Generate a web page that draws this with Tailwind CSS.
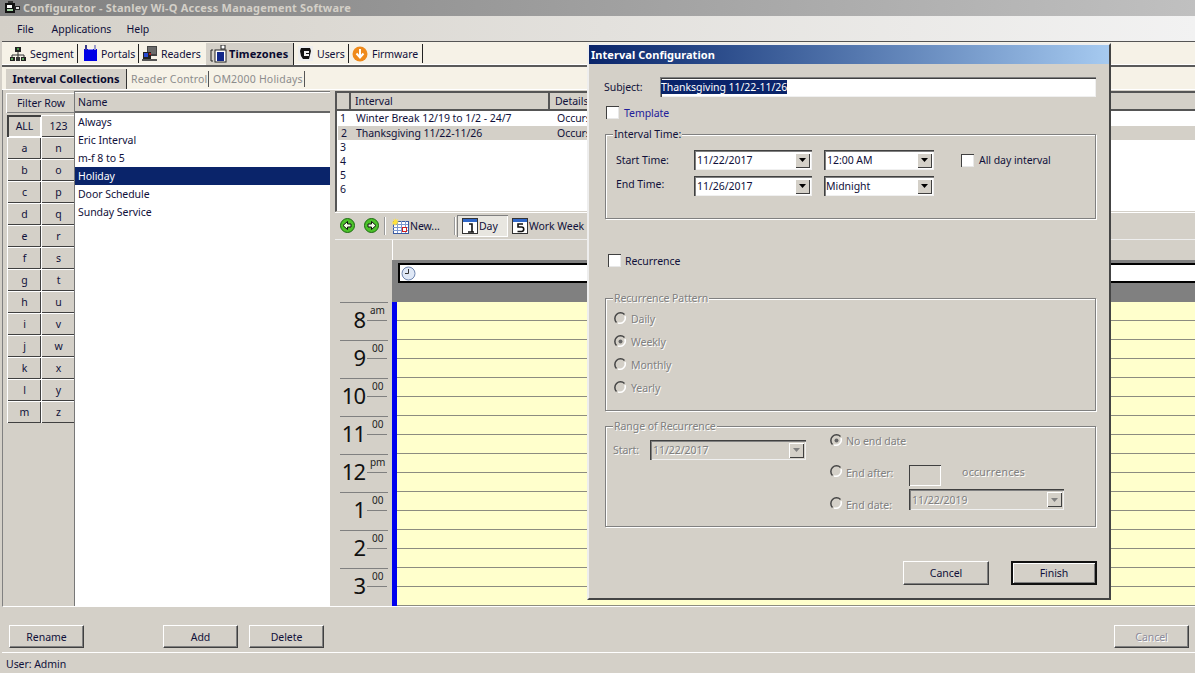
<!DOCTYPE html>
<html><head><meta charset="utf-8">
<script src="https://cdn.jsdelivr.net/npm/@tailwindcss/browser@4"></script>
</head>
<body class="m-0">
<div class="relative w-[1195px] h-[673px] overflow-hidden flex flex-col bg-[#d4d0c8] text-[10.5px] tracking-[-0.05px] leading-[14px] text-[#10103a] font-['Noto_Sans',sans-serif] antialiased">

  <!-- title bar -->
  <div class="h-[16px] shrink-0 flex items-center bg-gradient-to-r from-[#808080] to-[#c0c0c0] pl-[4px]">
    <svg width="17" height="14" viewBox="0 0 17 14"><rect x="1" y="2" width="10" height="10" fill="#111"/><rect x="3" y="4" width="5" height="3" fill="#fff"/><rect x="3" y="8" width="6" height="2" fill="#9fd0a0"/><rect x="10" y="5" width="6" height="4" fill="#222"/><rect x="12" y="6" width="3" height="2" fill="#ddd"/><rect x="4" y="0" width="5" height="2" fill="#333"/></svg>
    <span class="ml-[2px] font-bold text-[11px] text-[#d4d0c8] tracking-[0.2px]">Configurator - Stanley Wi-Q Access Management Software</span>
  </div>

  <!-- menu bar -->
  <div class="h-[26px] shrink-0 flex items-center ml-[2px] pl-[15px] gap-[18px] bg-gradient-to-r from-[#d4d0c8] to-[#f2f2f2] border-b border-[#555]">
    <span>File</span><span class="w-[57px] whitespace-nowrap">Applications</span><span>Help</span>
  </div>

  <!-- main toolbar -->
  <div class="h-[25px] shrink-0 flex items-center ml-[2px] bg-[#f6f2e7] border-b-2 border-[#5a5a5a] shadow-[inset_0_-1px_0_#fff]">
    <div class="flex items-center h-[19px] pl-[8px] border-r border-[#222] w-[76px]">
      <svg class="shrink-0" width="16" height="16" viewBox="0 0 16 16"><rect x="5" y="1" width="6" height="5" fill="#222"/><rect x="7" y="2" width="2" height="2" fill="#4a9a4a"/><path d="M8 6v3M2 9h12M2 9v2M8 9v2M14 9v2" stroke="#333" fill="none"/><rect x="0" y="11" width="5" height="4" fill="#222"/><rect x="6" y="11" width="4" height="4" fill="#333"/><rect x="11" y="11" width="5" height="4" fill="#222"/><rect x="1" y="12" width="2" height="2" fill="#5aa55a"/><rect x="12" y="12" width="2" height="2" fill="#5aa55a"/></svg>
      <span class="ml-[4px]">Segment</span>
    </div>
    <div class="flex items-center h-[19px] pl-[5px] border-r border-[#222] w-[61px]">
      <svg class="shrink-0" width="15" height="17" viewBox="0 0 15 17"><rect x="1" y="4" width="13" height="12" fill="#0000e6"/><rect x="2" y="0" width="2" height="5" fill="#3a3a88"/><rect x="11" y="0" width="2" height="5" fill="#9a9ac8"/><path d="M5 4h5" stroke="#fff"/></svg>
      <span class="ml-[3px]">Portals</span>
    </div>
    <div class="flex items-center h-[19px] pl-[3px] w-[67px]">
      <svg class="shrink-0" width="16" height="16" viewBox="0 0 16 16"><rect x="5" y="0" width="10" height="10" fill="#444"/><rect x="6" y="1" width="8" height="7" fill="#6a6a6a"/><rect x="1" y="6" width="8" height="7" fill="#222"/><rect x="2" y="7" width="4" height="4" fill="#2a4ad0"/><rect x="7" y="7" width="2" height="2" fill="#b02020"/><rect x="0" y="13" width="15" height="2" fill="#555"/></svg>
      <span class="ml-[3px]">Readers</span>
    </div>
    <div class="flex items-center h-[22px] pl-[4px] bg-[#d4d0c8] border-r border-[#222] w-[88px]">
      <svg class="shrink-0" width="17" height="18" viewBox="0 0 17 18"><path d="M1 5v11M3 5H1M3 16H1" stroke="#222" fill="none"/><rect x="5" y="5" width="11" height="12" fill="#fff" stroke="#222"/><rect x="7" y="7" width="7" height="9" fill="#12288a"/><rect x="11" y="0" width="4" height="4" fill="#fff" stroke="#222"/></svg>
      <span class="ml-[2px] font-bold text-[11px] text-[#0a0a30] tracking-[0.1px]">Timezones</span>
    </div>
    <div class="flex items-center h-[19px] pl-[4px] border-r border-[#222] w-[55px]">
      <svg class="shrink-0" width="15" height="15" viewBox="0 0 15 15"><rect width="15" height="15" fill="#eee"/><path d="M3 2h9l1 3-1 4-1 4H5L3 10 2 5z" fill="#111"/><path d="M6 5h5v2H8v1h3v2H6z" fill="#eee"/></svg>
      <span class="ml-[4px]">Users</span>
    </div>
    <div class="flex items-center h-[19px] pl-[3px] border-r border-[#222] w-[74px]">
      <svg class="shrink-0" width="16" height="16" viewBox="0 0 16 16"><circle cx="8" cy="8" r="7.5" fill="#ef8a1a"/><path d="M8 3v7M4.500 7.500 8 11.500l3.500-4" stroke="#fff" stroke-width="2" fill="none"/></svg>
      <span class="ml-[4px]">Firmware</span>
    </div>
  </div>

  <!-- tabs -->
  <div class="h-[23px] shrink-0 flex items-end ml-[2px] pl-[4px] bg-[#f6f2e7] border-b border-white">
    <div class="h-[20px] w-[121px] flex items-center justify-center bg-[#d4d0c8] border-r border-[#333] font-bold text-[11px] tracking-normal text-[#0a0a30]">Interval Collections</div>
    <div class="h-[16px] mb-[2px] flex items-center pl-[4px] w-[82px] border-r border-[#555] text-[#8c8c8c] tracking-[0.15px] whitespace-nowrap">Reader Control</div>
    <div class="h-[16px] mb-[2px] flex items-center pl-[4px] w-[96px] border-r border-[#555] text-[#8c8c8c] tracking-[0.2px] whitespace-nowrap">OM2000 Holidays</div>
  </div>

  <!-- main -->
  <div class="h-[517px] shrink-0 flex ml-[2px] border-l border-[#808080] border-b border-b-white">
    <!-- filter column -->
    <div class="w-[68px] ml-[3px] pt-[3px] shrink-0">
      <div class="h-[20px] w-[69px] pl-[1px] flex items-center justify-center shadow-[inset_1px_1px_0_#fff,inset_-1px_-1px_0_#808080]">Filter Row</div>
      <div class="grid grid-cols-2 w-[68px] ml-[1px] auto-rows-[22px] mt-[2px] text-center [&>div]:flex [&>div]:items-center [&>div]:justify-center [&>div]:pl-[1px] [&>div]:shadow-[inset_1px_1px_0_#fff,inset_-1px_-1px_0_#404040]">
        <div class="!shadow-[inset_2px_2px_0_#404040,inset_-1px_-1px_0_#fff]">ALL</div><div>123</div>
        <div>a</div><div>n</div><div>b</div><div>o</div><div>c</div><div>p</div><div>d</div><div>q</div><div>e</div><div>r</div><div>f</div><div>s</div><div>g</div><div>t</div><div>h</div><div>u</div><div>i</div><div>v</div><div>j</div><div>w</div><div>k</div><div>x</div><div>l</div><div>y</div><div>m</div><div>z</div>
      </div>
    </div>
    <!-- name list -->
    <div class="w-[256px] shrink-0 mt-[1px] flex flex-col bg-white border-l border-[#777]">
      <div class="h-[22px] shrink-0 flex items-center pl-[3px] bg-[#d4d0c8] border-t border-[#777] border-b-2 border-b-[#666] shadow-[inset_0_1px_0_#fff]">Name</div>
      <div class="h-[18px] flex items-center pl-[3px]">Always</div>
      <div class="h-[18px] flex items-center pl-[3px]">Eric Interval</div>
      <div class="h-[18px] flex items-center pl-[3px]">m-f 8 to 5</div>
      <div class="h-[18px] flex items-center pl-[3px] bg-[#0a246a] text-white">Holiday</div>
      <div class="h-[18px] flex items-center pl-[3px]">Door Schedule</div>
      <div class="h-[18px] flex items-center pl-[3px]">Sunday Service</div>
    </div>
    <!-- right side -->
    <div class="flex-1 min-w-0 ml-[5px] flex flex-col">
      <!-- interval grid -->
      <div class="h-[121px] shrink-0 mt-[1px] bg-white border-t-2 border-l-2 border-[#555] border-b border-b-[#d4d0c8] shadow-[0_1px_0_#fff]">
        <div class="h-[16px] flex bg-[#d4d0c8] border-b-2 border-[#555] box-content">
          <div class="w-[14px] border-r-2 border-[#555]"></div>
          <div class="w-[199px] pl-[4px] flex items-center border-r-2 border-[#555]">Interval</div>
          <div class="flex-1 pl-[5px] flex items-center">Details</div>
        </div>
        <div>
          <div class="h-[14px] flex items-center pl-[3px]"><span class="w-[16px]">1</span><span class="w-[201px]">Winter Break 12/19 to 1/2 - 24/7</span><span>Occurs</span></div>
          <div class="h-[14px] flex items-center pl-[3px] ml-[1px] mt-[1px] bg-[#d4d0c8]"><span class="w-[15px]">2</span><span class="w-[201px]">Thanksgiving 11/22-11/26</span><span>Occurs</span></div>
          <div class="h-[14px] flex items-center pl-[3px]">3</div>
          <div class="h-[14px] flex items-center pl-[3px]">4</div>
          <div class="h-[14px] flex items-center pl-[3px]">5</div>
          <div class="h-[14px] flex items-center pl-[3px]">6</div>
        </div>
      </div>
      <!-- calendar toolbar -->
      <div class="h-[27px] shrink-0 flex items-center pl-[5px] text-[#10103a]">
        <svg width="15" height="15" viewBox="0 0 15 15"><circle cx="7.500" cy="7.500" r="7" fill="#4cc22a" stroke="#1c6a10"/><path d="M11 6H7.500V3.500L3 7.500l4.500 4V9H11z" fill="#f4ffe8" stroke="#111"/></svg>
        <svg class="ml-[9px]" width="15" height="15" viewBox="0 0 15 15"><circle cx="7.500" cy="7.500" r="7" fill="#4cc22a" stroke="#1c6a10"/><path d="M4 6h3.500V3.500l4.500 4-4.500 4V9H4z" fill="#f4ffe8" stroke="#111"/></svg>
        <div class="w-px h-[18px] bg-[#999] ml-[5px] shadow-[1px_0_0_#fff]"></div>
        <svg class="ml-[7px]" width="17" height="16" viewBox="0 0 17 16"><rect x="1.500" y="3.500" width="15" height="12" fill="#fff" stroke="#3a5aa0"/><path d="M1 6.500h15M1 9.500h15M1 12.500h15M5.500 3v12M9.500 3v12M13.500 3v12" stroke="#7d99d0"/><rect x="10.500" y="9.500" width="4" height="4" fill="#fff" stroke="#d02020"/><path d="M3 0l1 2 2-1-1 2 2 1-2 1 1 2-2-1-1 2-1-2-2 1 1-2-1-1 2-1-1-2 2 1z" fill="#ffe23c"/></svg>
        <span class="ml-[1px] w-[44px]">New...</span>
        <div class="w-px h-[18px] bg-[#999] shadow-[1px_0_0_#fff]"></div>
        <div class="ml-[2px] h-[22px] w-[51px] flex items-center pl-[5px] bg-[#e8e6e0] shadow-[inset_1px_1px_0_#808080,inset_-1px_-1px_0_#fff]">
          <svg width="16" height="16" viewBox="0 0 16 16"><rect x=".5" y=".5" width="15" height="15" fill="#fff" stroke="#333"/><rect x="1" y="1" width="14" height="3" fill="#2f67c8"/><path d="M7 6h3v8M6 14h6" stroke="#111" stroke-width="1.600" fill="none"/></svg>
          <span class="ml-[1px]">Day</span>
        </div>
        <div class="ml-[4px] flex items-center">
          <svg width="16" height="16" viewBox="0 0 16 16"><rect x=".5" y=".5" width="15" height="15" fill="#fff" stroke="#333"/><rect x="1" y="1" width="14" height="3" fill="#2f67c8"/><path d="M11 6H6v3h3.500a2 2 0 0 1 0 4.500H5.500" stroke="#111" stroke-width="1.600" fill="none"/></svg>
          <span class="ml-[1px]">Work Week</span>
        </div>
      </div>
      <!-- calendar -->
      <div class="flex-1 min-h-0 flex border-t border-[#eee] overflow-hidden">
        <div class="w-[58px] shrink-0 -ml-px border-l border-[#808080] flex flex-col">
          <div class="h-[62px] shrink-0"></div>
          <div class="relative h-[38px] shrink-0 ml-[5px] mr-[4px] border-t border-[#808080] flex"><span class="w-[25px] text-right text-[22px] leading-[32px] text-[#111] -tracking-[1px]">8</span><span class="ml-[5px] text-[10px] leading-[14px] text-[#222]">am</span><span class="absolute left-[27px] right-[1px] top-[17px] border-t border-[#808080]"></span></div>
          <div class="relative h-[38px] shrink-0 ml-[5px] mr-[4px] border-t border-[#808080] flex"><span class="w-[25px] text-right text-[22px] leading-[32px] text-[#111] -tracking-[1px]">9</span><span class="ml-[7px] text-[10px] leading-[14px] text-[#222]">00</span><span class="absolute left-[27px] right-[1px] top-[17px] border-t border-[#808080]"></span></div>
          <div class="relative h-[38px] shrink-0 ml-[5px] mr-[4px] border-t border-[#808080] flex"><span class="w-[25px] text-right text-[22px] leading-[32px] text-[#111] -tracking-[1px]">10</span><span class="ml-[7px] text-[10px] leading-[14px] text-[#222]">00</span><span class="absolute left-[27px] right-[1px] top-[17px] border-t border-[#808080]"></span></div>
          <div class="relative h-[38px] shrink-0 ml-[5px] mr-[4px] border-t border-[#808080] flex"><span class="w-[25px] text-right text-[22px] leading-[32px] text-[#111] -tracking-[1px]">11</span><span class="ml-[7px] text-[10px] leading-[14px] text-[#222]">00</span><span class="absolute left-[27px] right-[1px] top-[17px] border-t border-[#808080]"></span></div>
          <div class="relative h-[38px] shrink-0 ml-[5px] mr-[4px] border-t border-[#808080] flex"><span class="w-[25px] text-right text-[22px] leading-[32px] text-[#111] -tracking-[1px]">12</span><span class="ml-[5px] text-[10px] leading-[14px] text-[#222]">pm</span><span class="absolute left-[27px] right-[1px] top-[17px] border-t border-[#808080]"></span></div>
          <div class="relative h-[38px] shrink-0 ml-[5px] mr-[4px] border-t border-[#808080] flex"><span class="w-[25px] text-right text-[22px] leading-[32px] text-[#111] -tracking-[1px]">1</span><span class="ml-[7px] text-[10px] leading-[14px] text-[#222]">00</span><span class="absolute left-[27px] right-[1px] top-[17px] border-t border-[#808080]"></span></div>
          <div class="relative h-[38px] shrink-0 ml-[5px] mr-[4px] border-t border-[#808080] flex"><span class="w-[25px] text-right text-[22px] leading-[32px] text-[#111] -tracking-[1px]">2</span><span class="ml-[7px] text-[10px] leading-[14px] text-[#222]">00</span><span class="absolute left-[27px] right-[1px] top-[17px] border-t border-[#808080]"></span></div>
          <div class="relative h-[38px] shrink-0 ml-[5px] mr-[4px] border-t border-[#808080] flex"><span class="w-[25px] text-right text-[22px] leading-[32px] text-[#111] -tracking-[1px]">3</span><span class="ml-[7px] text-[10px] leading-[14px] text-[#222]">00</span><span class="absolute left-[27px] right-[1px] top-[17px] border-t border-[#808080]"></span></div>
        </div>
        <div class="flex-1 min-w-0 flex flex-col">
          <div class="h-[20px] shrink-0 border-l border-white"></div>
          <div class="h-[42px] shrink-0 bg-[#808080] pt-[3px] pl-[6px]">
            <div class="h-[20px] bg-white border-2 border-black border-r-0 flex items-center pl-[1px]">
              <svg width="15" height="15" viewBox="0 0 15 15"><circle cx="7.500" cy="7.500" r="6.500" fill="#dfe8f6" stroke="#6f86b0"/><path d="M7.500 3v4.500H4" stroke="#333" fill="none"/></svg>
            </div>
          </div>
          <div class="flex-1 flex min-h-0">
            <div class="w-[5px] bg-[#0000ee] shrink-0"></div>
            <div class="flex-1 bg-[repeating-linear-gradient(to_bottom,#ffffcc_0,#ffffcc_18px,#8c8c80_18px,#8c8c80_19px)]"></div>
          </div>
        </div>
      </div>
    </div>
  </div>

  <!-- bottom buttons -->
  <div class="h-[46px] shrink-0 flex items-start pt-[18px] ml-[2px] pl-[7px] pr-[6px] border-b border-white">
    <div class="h-[23px] w-[75px] flex items-center justify-center border border-t-white border-l-white border-r-[#404040] border-b-[#404040] shadow-[inset_-1px_-1px_0_#808080]">Rename</div>
    <div class="ml-[79px] h-[23px] w-[75px] flex items-center justify-center border border-t-white border-l-white border-r-[#404040] border-b-[#404040] shadow-[inset_-1px_-1px_0_#808080]">Add</div>
    <div class="ml-[11px] h-[23px] w-[75px] flex items-center justify-center border border-t-white border-l-white border-r-[#404040] border-b-[#404040] shadow-[inset_-1px_-1px_0_#808080]">Delete</div>
    <div class="ml-auto h-[23px] w-[75px] flex items-center justify-center border border-t-white border-l-white border-r-[#404040] border-b-[#404040] shadow-[inset_-1px_-1px_0_#808080] text-[#8c8c9c] [text-shadow:1px_1px_0_#fff]">Cancel</div>
  </div>

  <!-- status -->
  <div class="flex-1 flex items-center pl-[6px] pt-[2px]">User: Admin</div>

  <!-- dialog -->
  <div class="absolute left-[587px] top-[43px] w-[524px] h-[557px] bg-[#d4d0c8] border-t-2 border-l-2 border-t-[#eee] border-l-[#eee] border-r-2 border-r-[#444] border-b-2 border-b-[#444] flex flex-col">
    <div class="h-[19px] shrink-0 flex items-center pl-[2px] bg-gradient-to-r from-[#0a246a] to-[#a6caf0] text-white text-[11px] tracking-[0.05px] font-bold">Interval Configuration</div>
    <div class="pl-[16px] pr-[13px] flex flex-col flex-1">
      <!-- subject -->
      <div class="mt-[13px] h-[20px] flex items-center">
        <span class="w-[54px] -ml-px mr-[2px]">Subject:</span>
        <div class="flex-1 h-[20px] bg-white flex items-center pl-[1px] shadow-[inset_1px_1px_0_#808080,inset_2px_2px_0_#404040,inset_-1px_-1px_0_#f0f0f0]">
          <span class="bg-[#0a246a] text-white">Thanksgiving 11/22-11/26</span>
        </div>
      </div>
      <!-- template -->
      <div class="mt-[9px] h-[13px] flex items-center pl-[1px]">
        <span class="w-[13px] h-[13px] bg-white shadow-[inset_1px_1px_0_#404040,inset_-1px_-1px_0_#e8e8e8]"></span>
        <span class="ml-[5px] text-[#22209a]">Template</span>
      </div>
      <!-- interval time -->
      <div class="relative mt-[15px] h-[85px] border border-[#808080] shadow-[inset_1px_1px_0_#fff,1px_1px_0_#fff] pt-[15px] pl-[10px]">
        <span class="absolute -top-[8px] left-[7px] px-[1px] bg-[#d4d0c8]">Interval Time:</span>
        <div class="flex items-center h-[20px]">
          <span class="w-[78px]">Start Time:</span>
          <div class="w-[118px] h-[20px] flex items-center justify-between bg-white pl-[3px] pr-[2px] shadow-[inset_1px_1px_0_#404040,inset_2px_2px_0_#808080,inset_-1px_-1px_0_#f0f0f0]"><span>11/22/2017</span><span class="w-[15px] h-[15px] flex items-center justify-center bg-[#d4d0c8] shadow-[inset_1px_1px_0_#fff,inset_-1px_-1px_0_#404040]"><svg width="7" height="4" viewBox="0 0 7 4"><path d="M0 0h7L3.500 4z" fill="#000"/></svg></span></div>
          <div class="ml-[12px] w-[110px] h-[20px] flex items-center justify-between bg-white pl-[3px] pr-[2px] shadow-[inset_1px_1px_0_#404040,inset_2px_2px_0_#808080,inset_-1px_-1px_0_#f0f0f0]"><span>12:00 AM</span><span class="w-[15px] h-[15px] flex items-center justify-center bg-[#d4d0c8] shadow-[inset_1px_1px_0_#fff,inset_-1px_-1px_0_#404040]"><svg width="7" height="4" viewBox="0 0 7 4"><path d="M0 0h7L3.500 4z" fill="#000"/></svg></span></div>
          <span class="ml-[27px] w-[13px] h-[13px] bg-white shadow-[inset_1px_1px_0_#404040,inset_-1px_-1px_0_#e8e8e8]"></span>
          <span class="ml-[5px]">All day interval</span>
        </div>
        <div class="flex items-center h-[20px] mt-[6px]">
          <span class="w-[78px] -mt-[5px]">End Time:</span>
          <div class="w-[118px] h-[20px] flex items-center justify-between bg-white pl-[3px] pr-[2px] shadow-[inset_1px_1px_0_#404040,inset_2px_2px_0_#808080,inset_-1px_-1px_0_#f0f0f0]"><span>11/26/2017</span><span class="w-[15px] h-[15px] flex items-center justify-center bg-[#d4d0c8] shadow-[inset_1px_1px_0_#fff,inset_-1px_-1px_0_#404040]"><svg width="7" height="4" viewBox="0 0 7 4"><path d="M0 0h7L3.500 4z" fill="#000"/></svg></span></div>
          <div class="ml-[12px] w-[110px] h-[20px] flex items-center justify-between bg-white pl-[2px] pr-[2px] shadow-[inset_1px_1px_0_#404040,inset_2px_2px_0_#808080,inset_-1px_-1px_0_#f0f0f0]"><span>Midnight</span><span class="w-[15px] h-[15px] flex items-center justify-center bg-[#d4d0c8] shadow-[inset_1px_1px_0_#fff,inset_-1px_-1px_0_#404040]"><svg width="7" height="4" viewBox="0 0 7 4"><path d="M0 0h7L3.500 4z" fill="#000"/></svg></span></div>
        </div>
      </div>
      <!-- recurrence -->
      <div class="mt-[35px] h-[13px] flex items-center pl-[3px]">
        <span class="w-[13px] h-[13px] bg-white shadow-[inset_1px_1px_0_#404040,inset_-1px_-1px_0_#e8e8e8]"></span>
        <span class="ml-[4px]">Recurrence</span>
      </div>
      <!-- recurrence pattern -->
      <div class="relative mt-[31px] h-[113px] border border-[#808080] shadow-[inset_1px_1px_0_#fff,1px_1px_0_#fff] pt-[8px] pl-[8px] text-[#808080] [text-shadow:1px_1px_0_#fff]">
        <span class="absolute -top-[8px] left-[7px] px-[1px] bg-[#d4d0c8]">Recurrence Pattern</span>
        <div class="h-[23px] flex items-center"><svg width="13" height="13" viewBox="0 0 13 13"><path d="M10.500 2.500a5.500 5.500 0 0 0-8 8" fill="none" stroke="#444" stroke-width="1.500"/><path d="M11 4a5.500 5.500 0 0 1-7 7" fill="none" stroke="#fff" stroke-width="1.500"/></svg><span class="ml-[4px]">Daily</span></div>
        <div class="h-[23px] flex items-center"><svg width="13" height="13" viewBox="0 0 13 13"><path d="M10.500 2.500a5.500 5.500 0 0 0-8 8" fill="none" stroke="#444" stroke-width="1.500"/><path d="M11 4a5.500 5.500 0 0 1-7 7" fill="none" stroke="#fff" stroke-width="1.500"/><circle cx="6.500" cy="6.500" r="2" fill="#666"/></svg><span class="ml-[4px]">Weekly</span></div>
        <div class="h-[23px] flex items-center"><svg width="13" height="13" viewBox="0 0 13 13"><path d="M10.500 2.500a5.500 5.500 0 0 0-8 8" fill="none" stroke="#444" stroke-width="1.500"/><path d="M11 4a5.500 5.500 0 0 1-7 7" fill="none" stroke="#fff" stroke-width="1.500"/></svg><span class="ml-[4px]">Monthly</span></div>
        <div class="h-[23px] flex items-center"><svg width="13" height="13" viewBox="0 0 13 13"><path d="M10.500 2.500a5.500 5.500 0 0 0-8 8" fill="none" stroke="#444" stroke-width="1.500"/><path d="M11 4a5.500 5.500 0 0 1-7 7" fill="none" stroke="#fff" stroke-width="1.500"/></svg><span class="ml-[4px]">Yearly</span></div>
      </div>
      <!-- range -->
      <div class="relative mt-[15px] h-[101px] border border-[#808080] shadow-[inset_1px_1px_0_#fff,1px_1px_0_#fff] flex pl-[7px] text-[#808080] [text-shadow:1px_1px_0_#fff]">
        <span class="absolute -top-[8px] left-[7px] px-[1px] bg-[#d4d0c8]">Range of Recurrence</span>
        <div class="pt-[13px] flex items-start">
          <span class="w-[37px] h-[20px] flex items-center">Start:</span>
          <div class="w-[156px] h-[20px] flex items-center justify-between pl-[3px] pr-[2px] shadow-[inset_1px_1px_0_#404040,inset_2px_2px_0_#808080,inset_-1px_-1px_0_#f0f0f0]"><span>11/22/2017</span><span class="w-[15px] h-[15px] flex items-center justify-center bg-[#d4d0c8] shadow-[inset_1px_1px_0_#fff,inset_-1px_-1px_0_#404040]"><svg width="7" height="4" viewBox="0 0 7 4"><path d="M0 0h7L3.500 4z" fill="#808080"/></svg></span></div>
        </div>
        <div class="ml-[24px] pt-[4px] flex flex-col">
          <div class="h-[18px] flex items-center"><svg width="13" height="13" viewBox="0 0 13 13"><path d="M10.500 2.500a5.500 5.500 0 0 0-8 8" fill="none" stroke="#444" stroke-width="1.500"/><path d="M11 4a5.500 5.500 0 0 1-7 7" fill="none" stroke="#fff" stroke-width="1.500"/><circle cx="6.500" cy="6.500" r="2" fill="#666"/></svg><span class="ml-[3px] mt-[2px]">No end date</span></div>
          <div class="mt-[16px] h-[21px] flex items-start"><svg class="shrink-0" width="13" height="13" viewBox="0 0 13 13"><path d="M10.500 2.500a5.500 5.500 0 0 0-8 8" fill="none" stroke="#444" stroke-width="1.500"/><path d="M11 4a5.500 5.500 0 0 1-7 7" fill="none" stroke="#fff" stroke-width="1.500"/></svg><span class="ml-[3px] mt-[1px] w-[63px]">End after:</span><span class="w-[32px] h-[21px] shadow-[inset_1px_1px_0_#404040,inset_-1px_-1px_0_#fff]"></span><span class="ml-[21px] tracking-[0.3px]">occurrences</span></div>
          <div class="mt-[3px] h-[21px] flex items-start"><svg class="shrink-0 mt-[8px]" width="13" height="13" viewBox="0 0 13 13"><path d="M10.500 2.500a5.500 5.500 0 0 0-8 8" fill="none" stroke="#444" stroke-width="1.500"/><path d="M11 4a5.500 5.500 0 0 1-7 7" fill="none" stroke="#fff" stroke-width="1.500"/></svg><span class="ml-[3px] w-[63px] mt-[9px]">End date:</span><div class="w-[155px] h-[21px] flex items-center justify-between pl-[3px] pr-[2px] shadow-[inset_1px_1px_0_#404040,inset_2px_2px_0_#808080,inset_-1px_-1px_0_#f0f0f0]"><span>11/22/2019</span><span class="w-[15px] h-[15px] flex items-center justify-center bg-[#d4d0c8] shadow-[inset_1px_1px_0_#fff,inset_-1px_-1px_0_#404040]"><svg width="7" height="4" viewBox="0 0 7 4"><path d="M0 0h7L3.500 4z" fill="#808080"/></svg></span></div></div>
        </div>
      </div>
      <!-- buttons -->
      <div class="mt-[34px] -mr-px flex justify-end gap-[22px]">
        <div class="h-[24px] w-[86px] flex items-center justify-center border border-t-white border-l-white border-r-[#404040] border-b-[#404040] shadow-[inset_-1px_-1px_0_#808080]">Cancel</div>
        <div class="h-[24px] w-[86px] flex items-center justify-center border-2 border-[#111] shadow-[inset_1px_1px_0_#fff,inset_-1px_-1px_0_#808080]">Finish</div>
      </div>
    </div>
  </div>
</div>
</body></html>
